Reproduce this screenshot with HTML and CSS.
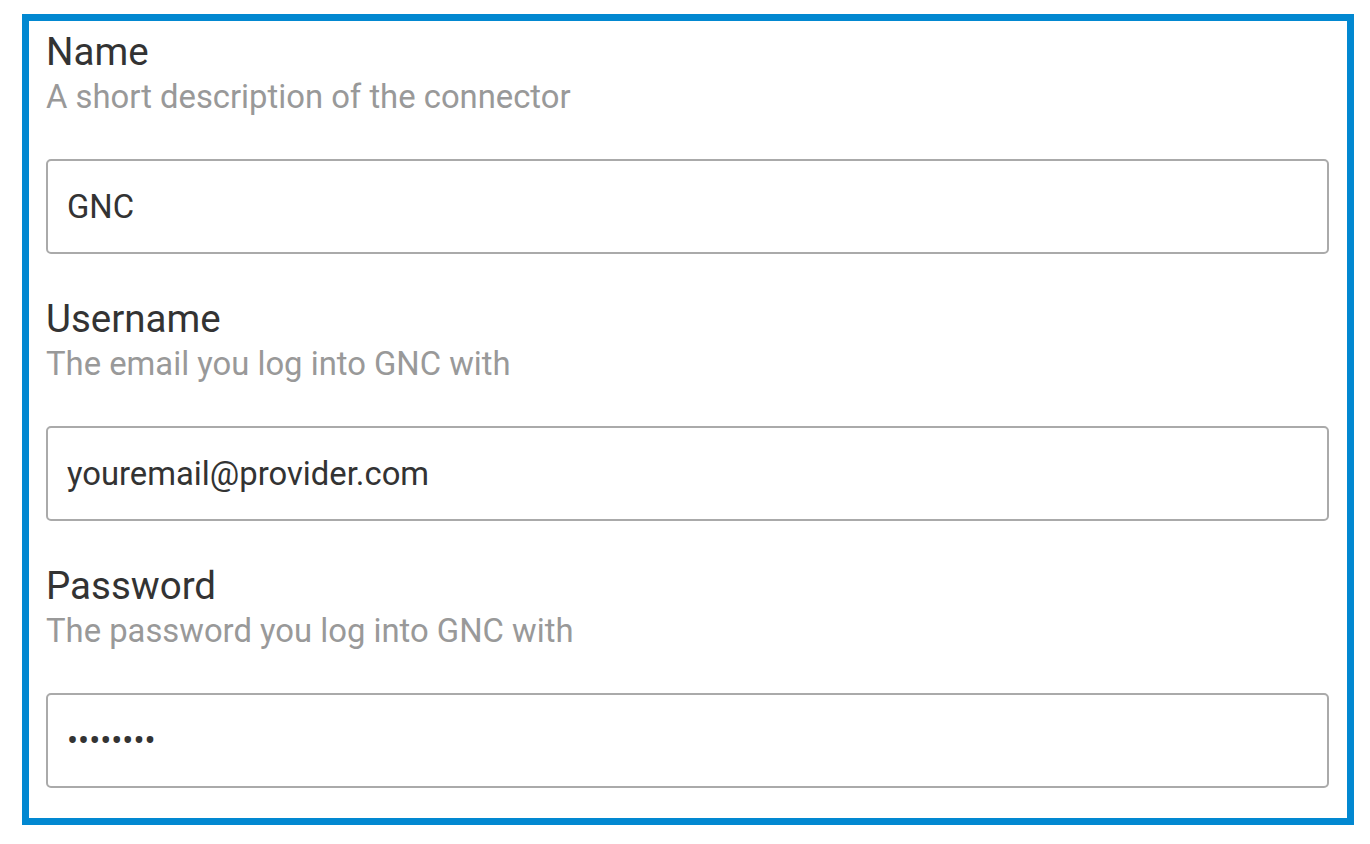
FILE: index.html
```html
<!DOCTYPE html>
<html lang="en">

<head>
    <meta charset="UTF-8">
    <meta name="viewport" content="width=device-width, initial-scale=1.0">
    <title>GNC connector</title>
    <link rel="stylesheet" href="styles.css">
</head>

<body>
    <div id="connectorForm">
        <div class="field">
            <label for="name">Name</label>
            <div class="hint">A short description of the connector</div>
            <input type="text" id="name" name="name" value="GNC">
        </div>
        <div class="field">
            <label for="username">Username</label>
            <div class="hint">The email you log into GNC with</div>
            <input type="text" id="username" name="username" value="youremail@provider.com">
        </div>
        <div class="field">
            <label for="password">Password</label>
            <div class="hint">The password you log into GNC with</div>
            <input type="password" id="password" name="password" value="password">
        </div>
    </div>
</body>

</html>
```

FILE: styles.css
```css
body,
html {
    margin: 0;
    background-color: #fff;
    font-family: Roboto, "Liberation Sans", sans-serif;
}

#connectorForm {
    margin: 14px 0 0 22px;
    width: 1332px;
    border: 7px solid #0288d1;
    box-sizing: border-box;
    padding: 9px 18px 30px 17px;
}

.field + .field {
    margin-top: 43px;
}

.field label {
    display: block;
    font-size: 38.5px;
    line-height: 44px;
    color: #333;
}

.field .hint {
    margin-top: 4px;
    font-size: 32.8px;
    line-height: 38px;
    color: #999;
}

.field input {
    display: block;
    width: 100%;
    height: 95px;
    margin-top: 43px;
    padding: 0 19px;
    box-sizing: border-box;
    border: 2px solid #aaa;
    border-radius: 5px;
    font-family: Roboto, sans-serif;
    font-size: 32.8px;
    color: #333;
    outline: none;
}
```
